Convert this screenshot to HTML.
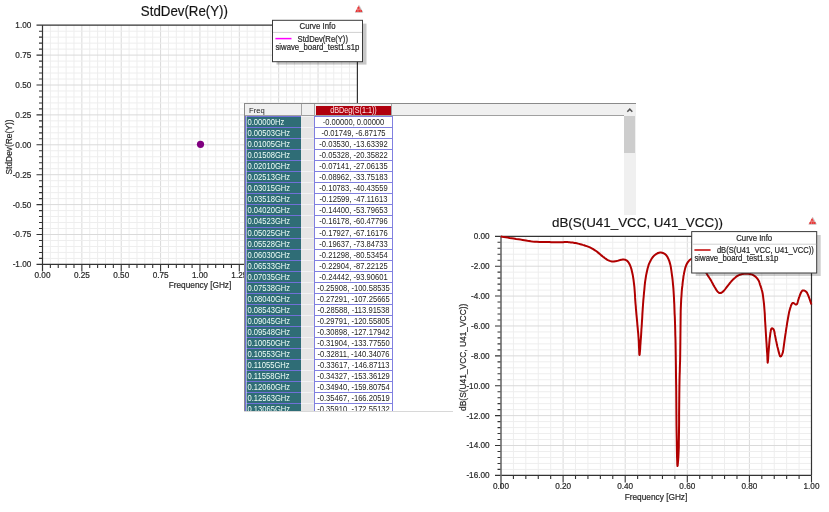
<!DOCTYPE html><html><head><meta charset="utf-8"><style>
html,body{margin:0;padding:0;background:#fff;width:829px;height:512px;overflow:hidden;font-family:"Liberation Sans", sans-serif;}
.abs{position:absolute;}
.fc{left:1px;width:56px;height:12px;background:#2f6d76;box-sizing:border-box;border-top:1px solid #7070d8;color:#f0fff8;font-size:7.6px;line-height:11.6px;padding-left:2.5px;white-space:nowrap}
.gc{left:57px;width:13px;height:12px;background:#e6e6e6;box-sizing:border-box;border-top:1px solid #f4f4f4}
.vc{left:70px;width:79px;height:12px;background:#fff;box-sizing:border-box;border:1px solid #8080e0;border-bottom:none;color:#222;font-size:7.6px;line-height:11.6px;text-align:center;white-space:nowrap}
.s{display:inline-block;transform:scaleY(1.15);transform-origin:50% 75%}
svg{position:absolute;left:0;top:0;will-change:transform;}
svg text{font-family:"Liberation Sans", sans-serif;stroke:#333;stroke-width:0.2px;}
#tbl{position:absolute;left:244px;top:103px;width:392px;height:309px;background:#fff;overflow:hidden;will-change:transform;}
</style></head><body>
<svg width="829" height="512" viewBox="0 0 829 512">
<line x1="50.37" y1="25.2" x2="50.37" y2="264.4" stroke="#eeeeee"/>
<line x1="58.24" y1="25.2" x2="58.24" y2="264.4" stroke="#eeeeee"/>
<line x1="66.12" y1="25.2" x2="66.12" y2="264.4" stroke="#eeeeee"/>
<line x1="73.99" y1="25.2" x2="73.99" y2="264.4" stroke="#eeeeee"/>
<line x1="81.86" y1="25.2" x2="81.86" y2="264.4" stroke="#dadada"/>
<line x1="89.73" y1="25.2" x2="89.73" y2="264.4" stroke="#eeeeee"/>
<line x1="97.61" y1="25.2" x2="97.61" y2="264.4" stroke="#eeeeee"/>
<line x1="105.48" y1="25.2" x2="105.48" y2="264.4" stroke="#eeeeee"/>
<line x1="113.35" y1="25.2" x2="113.35" y2="264.4" stroke="#eeeeee"/>
<line x1="121.22" y1="25.2" x2="121.22" y2="264.4" stroke="#dadada"/>
<line x1="129.1" y1="25.2" x2="129.1" y2="264.4" stroke="#eeeeee"/>
<line x1="136.97" y1="25.2" x2="136.97" y2="264.4" stroke="#eeeeee"/>
<line x1="144.84" y1="25.2" x2="144.84" y2="264.4" stroke="#eeeeee"/>
<line x1="152.71" y1="25.2" x2="152.71" y2="264.4" stroke="#eeeeee"/>
<line x1="160.59" y1="25.2" x2="160.59" y2="264.4" stroke="#dadada"/>
<line x1="168.46" y1="25.2" x2="168.46" y2="264.4" stroke="#eeeeee"/>
<line x1="176.33" y1="25.2" x2="176.33" y2="264.4" stroke="#eeeeee"/>
<line x1="184.2" y1="25.2" x2="184.2" y2="264.4" stroke="#eeeeee"/>
<line x1="192.08" y1="25.2" x2="192.08" y2="264.4" stroke="#eeeeee"/>
<line x1="199.95" y1="25.2" x2="199.95" y2="264.4" stroke="#dadada"/>
<line x1="207.82" y1="25.2" x2="207.82" y2="264.4" stroke="#eeeeee"/>
<line x1="215.69" y1="25.2" x2="215.69" y2="264.4" stroke="#eeeeee"/>
<line x1="223.57" y1="25.2" x2="223.57" y2="264.4" stroke="#eeeeee"/>
<line x1="231.44" y1="25.2" x2="231.44" y2="264.4" stroke="#eeeeee"/>
<line x1="239.31" y1="25.2" x2="239.31" y2="264.4" stroke="#dadada"/>
<line x1="247.19" y1="25.2" x2="247.19" y2="264.4" stroke="#eeeeee"/>
<line x1="255.06" y1="25.2" x2="255.06" y2="264.4" stroke="#eeeeee"/>
<line x1="262.93" y1="25.2" x2="262.93" y2="264.4" stroke="#eeeeee"/>
<line x1="270.8" y1="25.2" x2="270.8" y2="264.4" stroke="#eeeeee"/>
<line x1="278.68" y1="25.2" x2="278.68" y2="264.4" stroke="#dadada"/>
<line x1="286.55" y1="25.2" x2="286.55" y2="264.4" stroke="#eeeeee"/>
<line x1="294.42" y1="25.2" x2="294.42" y2="264.4" stroke="#eeeeee"/>
<line x1="302.29" y1="25.2" x2="302.29" y2="264.4" stroke="#eeeeee"/>
<line x1="310.16" y1="25.2" x2="310.16" y2="264.4" stroke="#eeeeee"/>
<line x1="318.04" y1="25.2" x2="318.04" y2="264.4" stroke="#dadada"/>
<line x1="325.91" y1="25.2" x2="325.91" y2="264.4" stroke="#eeeeee"/>
<line x1="333.78" y1="25.2" x2="333.78" y2="264.4" stroke="#eeeeee"/>
<line x1="341.65" y1="25.2" x2="341.65" y2="264.4" stroke="#eeeeee"/>
<line x1="349.53" y1="25.2" x2="349.53" y2="264.4" stroke="#eeeeee"/>
<line x1="42.5" y1="31.18" x2="357.4" y2="31.18" stroke="#eeeeee"/>
<line x1="42.5" y1="37.16" x2="357.4" y2="37.16" stroke="#eeeeee"/>
<line x1="42.5" y1="43.14" x2="357.4" y2="43.14" stroke="#eeeeee"/>
<line x1="42.5" y1="49.12" x2="357.4" y2="49.12" stroke="#eeeeee"/>
<line x1="42.5" y1="55.1" x2="357.4" y2="55.1" stroke="#dadada"/>
<line x1="42.5" y1="61.08" x2="357.4" y2="61.08" stroke="#eeeeee"/>
<line x1="42.5" y1="67.06" x2="357.4" y2="67.06" stroke="#eeeeee"/>
<line x1="42.5" y1="73.04" x2="357.4" y2="73.04" stroke="#eeeeee"/>
<line x1="42.5" y1="79.02" x2="357.4" y2="79.02" stroke="#eeeeee"/>
<line x1="42.5" y1="85" x2="357.4" y2="85" stroke="#dadada"/>
<line x1="42.5" y1="90.98" x2="357.4" y2="90.98" stroke="#eeeeee"/>
<line x1="42.5" y1="96.96" x2="357.4" y2="96.96" stroke="#eeeeee"/>
<line x1="42.5" y1="102.94" x2="357.4" y2="102.94" stroke="#eeeeee"/>
<line x1="42.5" y1="108.92" x2="357.4" y2="108.92" stroke="#eeeeee"/>
<line x1="42.5" y1="114.9" x2="357.4" y2="114.9" stroke="#dadada"/>
<line x1="42.5" y1="120.88" x2="357.4" y2="120.88" stroke="#eeeeee"/>
<line x1="42.5" y1="126.86" x2="357.4" y2="126.86" stroke="#eeeeee"/>
<line x1="42.5" y1="132.84" x2="357.4" y2="132.84" stroke="#eeeeee"/>
<line x1="42.5" y1="138.82" x2="357.4" y2="138.82" stroke="#eeeeee"/>
<line x1="42.5" y1="144.8" x2="357.4" y2="144.8" stroke="#dadada"/>
<line x1="42.5" y1="150.78" x2="357.4" y2="150.78" stroke="#eeeeee"/>
<line x1="42.5" y1="156.76" x2="357.4" y2="156.76" stroke="#eeeeee"/>
<line x1="42.5" y1="162.74" x2="357.4" y2="162.74" stroke="#eeeeee"/>
<line x1="42.5" y1="168.72" x2="357.4" y2="168.72" stroke="#eeeeee"/>
<line x1="42.5" y1="174.7" x2="357.4" y2="174.7" stroke="#dadada"/>
<line x1="42.5" y1="180.68" x2="357.4" y2="180.68" stroke="#eeeeee"/>
<line x1="42.5" y1="186.66" x2="357.4" y2="186.66" stroke="#eeeeee"/>
<line x1="42.5" y1="192.64" x2="357.4" y2="192.64" stroke="#eeeeee"/>
<line x1="42.5" y1="198.62" x2="357.4" y2="198.62" stroke="#eeeeee"/>
<line x1="42.5" y1="204.6" x2="357.4" y2="204.6" stroke="#dadada"/>
<line x1="42.5" y1="210.58" x2="357.4" y2="210.58" stroke="#eeeeee"/>
<line x1="42.5" y1="216.56" x2="357.4" y2="216.56" stroke="#eeeeee"/>
<line x1="42.5" y1="222.54" x2="357.4" y2="222.54" stroke="#eeeeee"/>
<line x1="42.5" y1="228.52" x2="357.4" y2="228.52" stroke="#eeeeee"/>
<line x1="42.5" y1="234.5" x2="357.4" y2="234.5" stroke="#dadada"/>
<line x1="42.5" y1="240.48" x2="357.4" y2="240.48" stroke="#eeeeee"/>
<line x1="42.5" y1="246.46" x2="357.4" y2="246.46" stroke="#eeeeee"/>
<line x1="42.5" y1="252.44" x2="357.4" y2="252.44" stroke="#eeeeee"/>
<line x1="42.5" y1="258.42" x2="357.4" y2="258.42" stroke="#eeeeee"/>
<path d="M50.37 264.4V267.9M58.24 264.4V267.9M66.12 264.4V267.9M73.99 264.4V267.9M81.86 264.4V271.4M89.73 264.4V267.9M97.61 264.4V267.9M105.48 264.4V267.9M113.35 264.4V267.9M121.22 264.4V271.4M129.1 264.4V267.9M136.97 264.4V267.9M144.84 264.4V267.9M152.71 264.4V267.9M160.59 264.4V271.4M168.46 264.4V267.9M176.33 264.4V267.9M184.2 264.4V267.9M192.08 264.4V267.9M199.95 264.4V271.4M207.82 264.4V267.9M215.69 264.4V267.9M223.57 264.4V267.9M231.44 264.4V267.9M239.31 264.4V271.4M247.19 264.4V267.9M255.06 264.4V267.9M262.93 264.4V267.9M270.8 264.4V267.9M278.68 264.4V271.4M286.55 264.4V267.9M294.42 264.4V267.9M302.29 264.4V267.9M310.16 264.4V267.9M318.04 264.4V271.4M325.91 264.4V267.9M333.78 264.4V267.9M341.65 264.4V267.9M349.53 264.4V267.9M357.4 264.4V271.4M39 31.18H42.5M39 37.16H42.5M39 43.14H42.5M39 49.12H42.5M36.5 55.1H42.5M39 61.08H42.5M39 67.06H42.5M39 73.04H42.5M39 79.02H42.5M36.5 85H42.5M39 90.98H42.5M39 96.96H42.5M39 102.94H42.5M39 108.92H42.5M36.5 114.9H42.5M39 120.88H42.5M39 126.86H42.5M39 132.84H42.5M39 138.82H42.5M36.5 144.8H42.5M39 150.78H42.5M39 156.76H42.5M39 162.74H42.5M39 168.72H42.5M36.5 174.7H42.5M39 180.68H42.5M39 186.66H42.5M39 192.64H42.5M39 198.62H42.5M36.5 204.6H42.5M39 210.58H42.5M39 216.56H42.5M39 222.54H42.5M39 228.52H42.5M36.5 234.5H42.5M39 240.48H42.5M39 246.46H42.5M39 252.44H42.5M39 258.42H42.5" stroke="#333" stroke-width="1.1" fill="none"/>
<path d="M36.5 25.2H357.4 M36.5 264.4H357.4 M357.4 25.2V264.4" stroke="#333" stroke-width="1.2" fill="none"/>
<path d="M42.5 25.2V271.4" stroke="#333" stroke-width="1.2" fill="none"/>
<circle cx="200.5" cy="144.3" r="3.6" fill="#800080"/>
<text transform="translate(31.3 28.1) scale(1 1.12)" font-size="8.2" fill="#222" text-anchor="end">1.00</text>
<text transform="translate(31.3 58) scale(1 1.12)" font-size="8.2" fill="#222" text-anchor="end">0.75</text>
<text transform="translate(31.3 87.9) scale(1 1.12)" font-size="8.2" fill="#222" text-anchor="end">0.50</text>
<text transform="translate(31.3 117.8) scale(1 1.12)" font-size="8.2" fill="#222" text-anchor="end">0.25</text>
<text transform="translate(31.3 147.7) scale(1 1.12)" font-size="8.2" fill="#222" text-anchor="end">0.00</text>
<text transform="translate(31.3 177.6) scale(1 1.12)" font-size="8.2" fill="#222" text-anchor="end">-0.25</text>
<text transform="translate(31.3 207.5) scale(1 1.12)" font-size="8.2" fill="#222" text-anchor="end">-0.50</text>
<text transform="translate(31.3 237.4) scale(1 1.12)" font-size="8.2" fill="#222" text-anchor="end">-0.75</text>
<text transform="translate(31.3 267.3) scale(1 1.12)" font-size="8.2" fill="#222" text-anchor="end">-1.00</text>
<text transform="translate(42.5 278.2) scale(1 1.12)" font-size="8.2" fill="#222" text-anchor="middle">0.00</text>
<text transform="translate(81.86 278.2) scale(1 1.12)" font-size="8.2" fill="#222" text-anchor="middle">0.25</text>
<text transform="translate(121.22 278.2) scale(1 1.12)" font-size="8.2" fill="#222" text-anchor="middle">0.50</text>
<text transform="translate(160.59 278.2) scale(1 1.12)" font-size="8.2" fill="#222" text-anchor="middle">0.75</text>
<text transform="translate(199.95 278.2) scale(1 1.12)" font-size="8.2" fill="#222" text-anchor="middle">1.00</text>
<text transform="translate(239.31 278.2) scale(1 1.12)" font-size="8.2" fill="#222" text-anchor="middle">1.25</text>
<text transform="translate(278.67 278.2) scale(1 1.12)" font-size="8.2" fill="#222" text-anchor="middle">1.50</text>
<text transform="translate(318.04 278.2) scale(1 1.12)" font-size="8.2" fill="#222" text-anchor="middle">1.75</text>
<text transform="translate(357.4 278.2) scale(1 1.12)" font-size="8.2" fill="#222" text-anchor="middle">2.00</text>
<text transform="translate(200 288) scale(1 1.12)" font-size="8.3" fill="#222" text-anchor="middle">Frequency [GHz]</text>
<text transform="translate(184.4 15.7) scale(1 1.1)" font-size="13.3" fill="#111" text-anchor="middle">StdDev(Re(Y))</text>
<text transform="translate(11.8 147) rotate(-90) scale(1 1.12)" font-size="8.4" fill="#222" text-anchor="middle">StdDev(Re(Y))</text>
<g transform="translate(359 5)"><path d="M-0.3 0.3L3.5 7.2H-4Z" fill="#e04848" opacity="0.75"/><path d="M0 0.2L3.8 7.2H-4" fill="none" stroke="#9aa" stroke-width="0.5"/><circle cx="-0.6" cy="2.8" r="0.9" fill="#e83030"/><circle cx="-2.3" cy="6" r="0.9" fill="#e83030"/><circle cx="0.2" cy="6" r="0.9" fill="#e83030"/><circle cx="2.2" cy="6" r="0.9" fill="#e83030"/></g>
<rect x="276.5" y="23.6" width="90" height="41" fill="#000" fill-opacity="0.22"/>
<rect x="272.5" y="20.3" width="90" height="41.4" fill="#fff" stroke="#3a3a3a" stroke-width="1"/>
<line x1="273" y1="32.4" x2="362" y2="32.4" stroke="#d0d0d0"/>
<text transform="translate(317.5 29.2) scale(1 1.12)" font-size="7.8" fill="#222" text-anchor="middle">Curve Info</text>
<line x1="275.4" y1="38.6" x2="291.5" y2="38.6" stroke="#ff00ff" stroke-width="1.5"/>
<text transform="translate(297.6 42.2) scale(1 1.12)" font-size="7.7" fill="#222">StdDev(Re(Y))</text>
<text transform="translate(275.4 50) scale(1 1.12)" font-size="7.8" fill="#222">siwave_board_test1.s1p</text>
</svg>
<div id="tbl">
<div class="abs" style="left:0;top:0;width:392px;height:309px;box-sizing:border-box;border:1px solid #8a8a8a;border-right:none;border-bottom:none"></div>
<div class="abs" style="left:1px;top:1px;width:391px;height:11px;background:#f0f0f0;border-bottom:1px solid #a0a0a0"></div>
<div class="abs" style="left:56.5px;top:1px;width:1.6px;height:12px;background:#a4a4a4"></div>
<div class="abs" style="left:69.5px;top:1px;width:1.6px;height:12px;background:#a4a4a4"></div>
<div class="abs" style="left:146.8px;top:1px;width:1.6px;height:12px;background:#a4a4a4"></div>
<div class="abs" style="left:5px;top:2px;font-size:7.6px;line-height:11px;color:#222">Freq</div>
<div class="abs" style="left:72px;top:3px;width:75px;height:9px;background:#b0000e;color:#ffe6e6;font-size:7.6px;line-height:10px;text-align:center"><span class="s" style="transform:scale(.95,1.12)">dBDeg(S(1:1))</span></div>
<div class="abs" style="left:380px;top:1px;width:12px;height:308px;background:#f0f0f0"></div>
<div class="abs" style="left:380px;top:13px;width:11px;height:37px;background:#cdcdcd"></div>
<svg class="abs" style="left:380px;top:1px" width="12" height="12"><path d="M3.3 7.8L5.8 5.2L8.3 7.8" stroke="#555" stroke-width="1.5" fill="none"/></svg>
<div class="abs fc" style="top:13px"><span class="s">0.00000Hz</span></div>
<div class="abs gc" style="top:13px"></div>
<div class="abs vc" style="top:13px"><span class="s">-0.00000, 0.00000</span></div>
<div class="abs fc" style="top:24.05px"><span class="s">0.00503GHz</span></div>
<div class="abs gc" style="top:24.05px"></div>
<div class="abs vc" style="top:24.05px"><span class="s">-0.01749, -6.87175</span></div>
<div class="abs fc" style="top:35.1px"><span class="s">0.01005GHz</span></div>
<div class="abs gc" style="top:35.1px"></div>
<div class="abs vc" style="top:35.1px"><span class="s">-0.03530, -13.63392</span></div>
<div class="abs fc" style="top:46.15px"><span class="s">0.01508GHz</span></div>
<div class="abs gc" style="top:46.15px"></div>
<div class="abs vc" style="top:46.15px"><span class="s">-0.05328, -20.35822</span></div>
<div class="abs fc" style="top:57.2px"><span class="s">0.02010GHz</span></div>
<div class="abs gc" style="top:57.2px"></div>
<div class="abs vc" style="top:57.2px"><span class="s">-0.07141, -27.06135</span></div>
<div class="abs fc" style="top:68.25px"><span class="s">0.02513GHz</span></div>
<div class="abs gc" style="top:68.25px"></div>
<div class="abs vc" style="top:68.25px"><span class="s">-0.08962, -33.75183</span></div>
<div class="abs fc" style="top:79.3px"><span class="s">0.03015GHz</span></div>
<div class="abs gc" style="top:79.3px"></div>
<div class="abs vc" style="top:79.3px"><span class="s">-0.10783, -40.43559</span></div>
<div class="abs fc" style="top:90.35px"><span class="s">0.03518GHz</span></div>
<div class="abs gc" style="top:90.35px"></div>
<div class="abs vc" style="top:90.35px"><span class="s">-0.12599, -47.11613</span></div>
<div class="abs fc" style="top:101.4px"><span class="s">0.04020GHz</span></div>
<div class="abs gc" style="top:101.4px"></div>
<div class="abs vc" style="top:101.4px"><span class="s">-0.14400, -53.79653</span></div>
<div class="abs fc" style="top:112.45px"><span class="s">0.04523GHz</span></div>
<div class="abs gc" style="top:112.45px"></div>
<div class="abs vc" style="top:112.45px"><span class="s">-0.16178, -60.47796</span></div>
<div class="abs fc" style="top:123.5px"><span class="s">0.05025GHz</span></div>
<div class="abs gc" style="top:123.5px"></div>
<div class="abs vc" style="top:123.5px"><span class="s">-0.17927, -67.16176</span></div>
<div class="abs fc" style="top:134.55px"><span class="s">0.05528GHz</span></div>
<div class="abs gc" style="top:134.55px"></div>
<div class="abs vc" style="top:134.55px"><span class="s">-0.19637, -73.84733</span></div>
<div class="abs fc" style="top:145.6px"><span class="s">0.06030GHz</span></div>
<div class="abs gc" style="top:145.6px"></div>
<div class="abs vc" style="top:145.6px"><span class="s">-0.21298, -80.53454</span></div>
<div class="abs fc" style="top:156.65px"><span class="s">0.06533GHz</span></div>
<div class="abs gc" style="top:156.65px"></div>
<div class="abs vc" style="top:156.65px"><span class="s">-0.22904, -87.22125</span></div>
<div class="abs fc" style="top:167.7px"><span class="s">0.07035GHz</span></div>
<div class="abs gc" style="top:167.7px"></div>
<div class="abs vc" style="top:167.7px"><span class="s">-0.24442, -93.90601</span></div>
<div class="abs fc" style="top:178.75px"><span class="s">0.07538GHz</span></div>
<div class="abs gc" style="top:178.75px"></div>
<div class="abs vc" style="top:178.75px"><span class="s">-0.25908, -100.58535</span></div>
<div class="abs fc" style="top:189.8px"><span class="s">0.08040GHz</span></div>
<div class="abs gc" style="top:189.8px"></div>
<div class="abs vc" style="top:189.8px"><span class="s">-0.27291, -107.25665</span></div>
<div class="abs fc" style="top:200.85px"><span class="s">0.08543GHz</span></div>
<div class="abs gc" style="top:200.85px"></div>
<div class="abs vc" style="top:200.85px"><span class="s">-0.28588, -113.91538</span></div>
<div class="abs fc" style="top:211.9px"><span class="s">0.09045GHz</span></div>
<div class="abs gc" style="top:211.9px"></div>
<div class="abs vc" style="top:211.9px"><span class="s">-0.29791, -120.55805</span></div>
<div class="abs fc" style="top:222.95px"><span class="s">0.09548GHz</span></div>
<div class="abs gc" style="top:222.95px"></div>
<div class="abs vc" style="top:222.95px"><span class="s">-0.30898, -127.17942</span></div>
<div class="abs fc" style="top:234px"><span class="s">0.10050GHz</span></div>
<div class="abs gc" style="top:234px"></div>
<div class="abs vc" style="top:234px"><span class="s">-0.31904, -133.77550</span></div>
<div class="abs fc" style="top:245.05px"><span class="s">0.10553GHz</span></div>
<div class="abs gc" style="top:245.05px"></div>
<div class="abs vc" style="top:245.05px"><span class="s">-0.32811, -140.34076</span></div>
<div class="abs fc" style="top:256.1px"><span class="s">0.11055GHz</span></div>
<div class="abs gc" style="top:256.1px"></div>
<div class="abs vc" style="top:256.1px"><span class="s">-0.33617, -146.87113</span></div>
<div class="abs fc" style="top:267.15px"><span class="s">0.11558GHz</span></div>
<div class="abs gc" style="top:267.15px"></div>
<div class="abs vc" style="top:267.15px"><span class="s">-0.34327, -153.36129</span></div>
<div class="abs fc" style="top:278.2px"><span class="s">0.12060GHz</span></div>
<div class="abs gc" style="top:278.2px"></div>
<div class="abs vc" style="top:278.2px"><span class="s">-0.34940, -159.80754</span></div>
<div class="abs fc" style="top:289.25px"><span class="s">0.12563GHz</span></div>
<div class="abs gc" style="top:289.25px"></div>
<div class="abs vc" style="top:289.25px"><span class="s">-0.35467, -166.20519</span></div>
<div class="abs fc" style="top:300.3px"><span class="s">0.13065GHz</span></div>
<div class="abs gc" style="top:300.3px"></div>
<div class="abs vc" style="top:300.3px"><span class="s">-0.35910, -172.55132</span></div>
<div class="abs" style="left:1px;top:13px;width:1px;height:300px;background:#7070d8"></div>
<div class="abs" style="left:2px;top:13px;width:1px;height:300px;background:#dfe8ee;opacity:.6"></div>
</div>
<div class="abs" style="left:244px;top:411px;width:209px;height:1px;background:#d8d8d8"></div>
<div class="abs" style="left:453px;top:215px;width:376px;height:297px;background:#fff"></div>
<svg width="829" height="512" viewBox="0 0 829 512">
<line x1="513.42" y1="236.3" x2="513.42" y2="475.4" stroke="#eeeeee"/>
<line x1="525.84" y1="236.3" x2="525.84" y2="475.4" stroke="#eeeeee"/>
<line x1="538.26" y1="236.3" x2="538.26" y2="475.4" stroke="#eeeeee"/>
<line x1="550.68" y1="236.3" x2="550.68" y2="475.4" stroke="#eeeeee"/>
<line x1="563.1" y1="236.3" x2="563.1" y2="475.4" stroke="#dadada"/>
<line x1="575.52" y1="236.3" x2="575.52" y2="475.4" stroke="#eeeeee"/>
<line x1="587.94" y1="236.3" x2="587.94" y2="475.4" stroke="#eeeeee"/>
<line x1="600.36" y1="236.3" x2="600.36" y2="475.4" stroke="#eeeeee"/>
<line x1="612.78" y1="236.3" x2="612.78" y2="475.4" stroke="#eeeeee"/>
<line x1="625.2" y1="236.3" x2="625.2" y2="475.4" stroke="#dadada"/>
<line x1="637.62" y1="236.3" x2="637.62" y2="475.4" stroke="#eeeeee"/>
<line x1="650.04" y1="236.3" x2="650.04" y2="475.4" stroke="#eeeeee"/>
<line x1="662.46" y1="236.3" x2="662.46" y2="475.4" stroke="#eeeeee"/>
<line x1="674.88" y1="236.3" x2="674.88" y2="475.4" stroke="#eeeeee"/>
<line x1="687.3" y1="236.3" x2="687.3" y2="475.4" stroke="#dadada"/>
<line x1="699.72" y1="236.3" x2="699.72" y2="475.4" stroke="#eeeeee"/>
<line x1="712.14" y1="236.3" x2="712.14" y2="475.4" stroke="#eeeeee"/>
<line x1="724.56" y1="236.3" x2="724.56" y2="475.4" stroke="#eeeeee"/>
<line x1="736.98" y1="236.3" x2="736.98" y2="475.4" stroke="#eeeeee"/>
<line x1="749.4" y1="236.3" x2="749.4" y2="475.4" stroke="#dadada"/>
<line x1="761.82" y1="236.3" x2="761.82" y2="475.4" stroke="#eeeeee"/>
<line x1="774.24" y1="236.3" x2="774.24" y2="475.4" stroke="#eeeeee"/>
<line x1="786.66" y1="236.3" x2="786.66" y2="475.4" stroke="#eeeeee"/>
<line x1="799.08" y1="236.3" x2="799.08" y2="475.4" stroke="#eeeeee"/>
<line x1="501" y1="242.28" x2="811.5" y2="242.28" stroke="#eeeeee"/>
<line x1="501" y1="248.25" x2="811.5" y2="248.25" stroke="#eeeeee"/>
<line x1="501" y1="254.23" x2="811.5" y2="254.23" stroke="#eeeeee"/>
<line x1="501" y1="260.21" x2="811.5" y2="260.21" stroke="#eeeeee"/>
<line x1="501" y1="266.19" x2="811.5" y2="266.19" stroke="#dadada"/>
<line x1="501" y1="272.17" x2="811.5" y2="272.17" stroke="#eeeeee"/>
<line x1="501" y1="278.14" x2="811.5" y2="278.14" stroke="#eeeeee"/>
<line x1="501" y1="284.12" x2="811.5" y2="284.12" stroke="#eeeeee"/>
<line x1="501" y1="290.1" x2="811.5" y2="290.1" stroke="#eeeeee"/>
<line x1="501" y1="296.07" x2="811.5" y2="296.07" stroke="#dadada"/>
<line x1="501" y1="302.05" x2="811.5" y2="302.05" stroke="#eeeeee"/>
<line x1="501" y1="308.03" x2="811.5" y2="308.03" stroke="#eeeeee"/>
<line x1="501" y1="314.01" x2="811.5" y2="314.01" stroke="#eeeeee"/>
<line x1="501" y1="319.99" x2="811.5" y2="319.99" stroke="#eeeeee"/>
<line x1="501" y1="325.96" x2="811.5" y2="325.96" stroke="#dadada"/>
<line x1="501" y1="331.94" x2="811.5" y2="331.94" stroke="#eeeeee"/>
<line x1="501" y1="337.92" x2="811.5" y2="337.92" stroke="#eeeeee"/>
<line x1="501" y1="343.89" x2="811.5" y2="343.89" stroke="#eeeeee"/>
<line x1="501" y1="349.87" x2="811.5" y2="349.87" stroke="#eeeeee"/>
<line x1="501" y1="355.85" x2="811.5" y2="355.85" stroke="#dadada"/>
<line x1="501" y1="361.83" x2="811.5" y2="361.83" stroke="#eeeeee"/>
<line x1="501" y1="367.8" x2="811.5" y2="367.8" stroke="#eeeeee"/>
<line x1="501" y1="373.78" x2="811.5" y2="373.78" stroke="#eeeeee"/>
<line x1="501" y1="379.76" x2="811.5" y2="379.76" stroke="#eeeeee"/>
<line x1="501" y1="385.74" x2="811.5" y2="385.74" stroke="#dadada"/>
<line x1="501" y1="391.72" x2="811.5" y2="391.72" stroke="#eeeeee"/>
<line x1="501" y1="397.69" x2="811.5" y2="397.69" stroke="#eeeeee"/>
<line x1="501" y1="403.67" x2="811.5" y2="403.67" stroke="#eeeeee"/>
<line x1="501" y1="409.65" x2="811.5" y2="409.65" stroke="#eeeeee"/>
<line x1="501" y1="415.62" x2="811.5" y2="415.62" stroke="#dadada"/>
<line x1="501" y1="421.6" x2="811.5" y2="421.6" stroke="#eeeeee"/>
<line x1="501" y1="427.58" x2="811.5" y2="427.58" stroke="#eeeeee"/>
<line x1="501" y1="433.56" x2="811.5" y2="433.56" stroke="#eeeeee"/>
<line x1="501" y1="439.53" x2="811.5" y2="439.53" stroke="#eeeeee"/>
<line x1="501" y1="445.51" x2="811.5" y2="445.51" stroke="#dadada"/>
<line x1="501" y1="451.49" x2="811.5" y2="451.49" stroke="#eeeeee"/>
<line x1="501" y1="457.47" x2="811.5" y2="457.47" stroke="#eeeeee"/>
<line x1="501" y1="463.44" x2="811.5" y2="463.44" stroke="#eeeeee"/>
<line x1="501" y1="469.42" x2="811.5" y2="469.42" stroke="#eeeeee"/>
<path d="M513.42 475.4V478.9M525.84 475.4V478.9M538.26 475.4V478.9M550.68 475.4V478.9M563.1 475.4V482.4M575.52 475.4V478.9M587.94 475.4V478.9M600.36 475.4V478.9M612.78 475.4V478.9M625.2 475.4V482.4M637.62 475.4V478.9M650.04 475.4V478.9M662.46 475.4V478.9M674.88 475.4V478.9M687.3 475.4V482.4M699.72 475.4V478.9M712.14 475.4V478.9M724.56 475.4V478.9M736.98 475.4V478.9M749.4 475.4V482.4M761.82 475.4V478.9M774.24 475.4V478.9M786.66 475.4V478.9M799.08 475.4V478.9M811.5 475.4V482.4M497.5 242.28H501M497.5 248.25H501M497.5 254.23H501M497.5 260.21H501M495 266.19H501M497.5 272.17H501M497.5 278.14H501M497.5 284.12H501M497.5 290.1H501M495 296.07H501M497.5 302.05H501M497.5 308.03H501M497.5 314.01H501M497.5 319.99H501M495 325.96H501M497.5 331.94H501M497.5 337.92H501M497.5 343.89H501M497.5 349.87H501M495 355.85H501M497.5 361.83H501M497.5 367.8H501M497.5 373.78H501M497.5 379.76H501M495 385.74H501M497.5 391.72H501M497.5 397.69H501M497.5 403.67H501M497.5 409.65H501M495 415.62H501M497.5 421.6H501M497.5 427.58H501M497.5 433.56H501M497.5 439.53H501M495 445.51H501M497.5 451.49H501M497.5 457.47H501M497.5 463.44H501M497.5 469.42H501" stroke="#333" stroke-width="1.1" fill="none"/>
<path d="M495 236.3H811.5 M495 475.4H811.5 M811.5 236.3V475.4" stroke="#333" stroke-width="1.2" fill="none"/>
<path d="M501 236.3V488.4" stroke="#6a6a6a" stroke-width="1.6" fill="none"/>
<polyline points="500.7,236.5 501.1,236.6 502.3,236.8 503.9,237.0 505.8,237.3 507.7,237.6 509.5,237.9 511.6,238.2 513.8,238.5 516.1,238.9 518.4,239.2 520.6,239.6 522.7,239.9 524.4,240.2 526.0,240.5 527.5,240.8 529.1,241.0 530.7,241.3 532.4,241.5 534.7,241.7 537.0,241.8 539.5,241.9 542.0,242.0 544.5,242.0 546.9,242.1 549.2,242.1 551.4,242.2 553.7,242.2 555.9,242.2 558.0,242.2 560.0,242.2 561.6,242.2 563.1,242.2 564.6,242.1 566.1,242.1 567.5,242.1 568.8,242.2 569.8,242.3 570.8,242.4 571.7,242.5 572.7,242.6 573.6,242.7 574.6,242.9 575.7,243.1 576.8,243.3 578.0,243.6 579.2,243.9 580.3,244.2 581.5,244.5 582.8,244.9 584.1,245.2 585.4,245.7 586.7,246.1 588.0,246.6 589.3,247.1 590.5,247.7 591.7,248.3 592.8,248.9 593.9,249.6 595.0,250.3 596.1,251.0 597.1,251.8 598.1,252.6 599.1,253.4 600.1,254.3 601.0,255.1 602.0,255.9 603.0,256.7 604.0,257.4 605.0,258.2 606.0,258.9 607.0,259.6 607.9,260.1 608.6,260.4 609.2,260.7 609.8,260.9 610.5,261.1 611.1,261.3 611.8,261.4 612.6,261.5 613.4,261.5 614.2,261.4 615.0,261.3 615.8,261.2 616.6,261.1 617.3,260.9 618.1,260.7 618.8,260.4 619.5,260.2 620.3,259.9 621.0,259.8 621.8,259.7 622.6,259.6 623.5,259.6 624.3,259.6 625.1,259.8 625.8,260.0 626.5,260.4 627.1,260.8 627.7,261.4 628.2,262.0 628.7,262.7 629.2,263.5 629.8,264.7 630.4,266.1 630.9,267.5 631.4,269.1 631.8,270.8 632.2,272.5 632.7,274.7 633.1,277.1 633.5,279.6 633.8,282.1 634.1,284.7 634.4,287.2 634.6,289.9 634.8,292.5 635.0,295.2 635.1,297.9 635.3,300.7 635.5,303.5 635.8,306.6 636.0,309.7 636.3,312.9 636.6,316.1 636.9,319.2 637.2,322.3 637.4,325.1 637.7,327.9 637.9,330.6 638.2,333.3 638.4,336.0 638.6,338.7 638.8,341.8 638.9,345.3 639.1,348.9 639.2,352.0 639.3,354.2 639.5,355.0 639.7,354.5 639.8,353.0 640.0,350.9 640.2,348.4 640.3,345.8 640.5,343.4 640.7,340.3 641.0,336.9 641.2,333.4 641.4,329.7 641.7,326.0 641.9,322.3 642.2,318.1 642.4,313.8 642.7,309.4 643.0,305.0 643.3,300.7 643.7,296.5 644.0,292.8 644.4,289.1 644.7,285.5 645.1,281.9 645.6,278.6 646.1,275.4 646.6,273.0 647.1,270.7 647.6,268.5 648.2,266.4 648.8,264.4 649.6,262.6 650.3,261.2 651.0,259.9 651.7,258.6 652.5,257.5 653.4,256.4 654.3,255.5 655.2,254.8 656.1,254.1 657.1,253.5 658.1,253.0 659.1,252.7 660.1,252.5 661.0,252.5 662.0,252.7 662.9,253.0 663.8,253.4 664.7,253.9 665.5,254.5 666.3,255.3 667.1,256.3 667.7,257.5 668.3,258.7 668.9,260.1 669.4,261.4 669.9,263.1 670.4,264.9 670.8,266.9 671.1,268.9 671.4,270.9 671.7,273.1 672.1,276.0 672.5,279.0 672.8,282.2 673.1,285.4 673.4,288.6 673.6,291.8 673.8,294.9 674.0,298.0 674.1,301.1 674.3,304.3 674.4,307.4 674.5,310.5 674.6,313.5 674.8,316.5 674.9,319.5 675.0,322.5 675.1,325.7 675.2,329.2 675.3,334.4 675.5,339.8 675.6,345.6 675.7,351.7 675.8,358.2 675.9,365.0 676.0,375.8 676.2,388.1 676.3,401.1 676.4,414.0 676.5,426.0 676.7,436.4 676.8,442.8 676.9,449.4 677.0,455.7 677.2,461.0 677.3,464.6 677.5,466.0 677.7,465.4 677.8,463.9 678.0,461.8 678.2,459.3 678.4,456.7 678.5,454.4 678.6,452.0 678.7,449.7 678.8,447.3 678.8,444.7 678.8,441.9 678.9,438.7 679.0,431.7 679.1,423.2 679.1,413.9 679.2,404.4 679.3,395.2 679.4,387.0 679.5,381.3 679.6,376.0 679.8,371.0 679.9,365.9 680.1,360.7 680.2,355.0 680.3,346.9 680.4,337.9 680.5,328.6 680.6,319.4 680.7,310.9 681.0,303.5 681.2,299.4 681.5,295.5 681.7,292.0 682.0,288.6 682.4,285.4 682.7,282.4 683.0,280.2 683.3,278.1 683.5,276.1 683.9,274.2 684.2,272.4 684.6,270.7 684.9,269.4 685.2,268.1 685.6,266.9 686.0,265.8 686.4,264.7 686.9,263.7 687.4,262.9 687.9,262.1 688.5,261.3 689.1,260.6 689.7,260.0 690.4,259.5 691.1,259.1 691.8,258.7 692.6,258.3 693.4,258.1 694.2,258.0 695.0,258.0 696.0,258.2 697.0,258.7 698.1,259.3 699.1,260.1 700.1,261.0 701.0,262.0 702.1,263.6 703.1,265.5 704.0,267.6 704.9,269.8 705.7,271.8 706.6,273.6 707.2,274.6 707.8,275.6 708.4,276.4 709.0,277.3 709.6,278.2 710.2,279.1 710.9,280.2 711.5,281.4 712.1,282.6 712.8,283.8 713.4,285.0 714.1,286.1 714.7,287.2 715.4,288.3 716.0,289.4 716.7,290.4 717.4,291.3 718.0,292.0 718.4,292.3 718.8,292.6 719.1,292.8 719.5,293.0 719.9,293.1 720.3,293.1 720.8,293.0 721.3,292.8 721.8,292.5 722.3,292.1 722.9,291.7 723.4,291.2 724.2,290.4 724.9,289.5 725.7,288.5 726.5,287.4 727.3,286.3 728.1,285.3 728.9,284.4 729.6,283.4 730.4,282.5 731.2,281.5 732.0,280.6 732.8,279.8 733.6,279.1 734.3,278.3 735.1,277.7 735.9,277.0 736.7,276.4 737.5,275.9 738.3,275.5 739.0,275.1 739.8,274.7 740.6,274.5 741.4,274.2 742.2,274.0 743.0,273.9 743.8,273.8 744.5,273.7 745.3,273.7 746.1,273.7 746.9,273.8 747.7,273.8 748.5,273.8 749.3,273.9 750.1,274.0 750.9,274.2 751.6,274.4 752.3,274.7 753.0,275.0 753.7,275.4 754.3,275.8 754.9,276.2 755.5,276.7 756.1,277.3 756.7,277.9 757.2,278.5 757.7,279.2 758.2,279.9 758.6,280.6 759.0,281.3 759.3,282.1 759.5,282.8 759.8,283.6 760.0,284.5 760.3,285.3 760.7,286.4 761.0,287.4 761.4,288.5 761.7,289.7 762.1,291.0 762.4,292.3 762.8,294.3 763.1,296.6 763.4,299.0 763.7,301.5 764.0,303.9 764.2,306.4 764.4,309.0 764.6,311.5 764.8,314.1 764.9,316.8 765.0,319.5 765.2,322.2 765.4,325.4 765.6,328.6 765.8,332.0 766.0,335.3 766.2,338.5 766.4,341.6 766.6,344.1 766.7,346.6 766.9,349.1 767.0,351.4 767.2,353.7 767.3,355.7 767.4,357.2 767.4,358.7 767.5,360.2 767.6,361.5 767.6,362.4 767.7,362.7 767.8,362.1 768.0,360.5 768.2,358.1 768.3,355.5 768.5,352.8 768.7,350.4 768.9,348.1 769.1,345.6 769.3,343.2 769.5,340.7 769.7,338.4 770.0,336.3 770.2,334.7 770.4,333.0 770.7,331.4 770.9,330.0 771.3,328.9 771.7,328.4 772.0,328.3 772.3,328.4 772.6,328.5 772.9,328.7 773.2,329.0 773.5,329.3 773.9,330.0 774.2,331.0 774.5,332.2 774.7,333.6 774.9,334.9 775.2,336.3 775.6,338.2 776.0,340.2 776.5,342.4 776.9,344.6 777.4,346.7 777.9,348.6 778.3,350.2 778.7,351.9 779.2,353.6 779.6,355.0 780.0,356.1 780.5,356.5 780.8,356.4 781.1,356.2 781.4,355.7 781.7,355.2 782.0,354.6 782.3,353.9 782.9,352.1 783.3,349.7 783.7,346.9 784.1,343.9 784.5,340.9 784.9,338.1 785.3,335.2 785.8,332.2 786.2,329.2 786.7,326.2 787.1,323.3 787.6,320.5 788.0,318.3 788.4,316.0 788.8,313.9 789.2,311.8 789.7,309.9 790.2,308.2 790.6,307.1 790.9,305.9 791.3,304.9 791.8,304.0 792.2,303.3 792.8,302.9 793.3,302.9 794.0,303.3 794.6,303.8 795.3,304.3 795.9,304.6 796.4,304.6 797.0,304.1 797.4,303.1 797.8,301.8 798.2,300.3 798.6,298.9 799.0,297.6 799.5,296.3 800.0,294.9 800.6,293.5 801.2,292.2 801.8,291.2 802.5,290.6 803.0,290.5 803.6,290.5 804.3,290.6 804.9,290.9 805.5,291.2 806.0,291.6 806.6,292.2 807.1,292.9 807.5,293.8 807.9,294.7 808.3,295.6 808.7,296.6 809.2,298.0 809.8,299.7 810.4,301.5 810.9,303.0 811.3,304.2 811.4,304.6" fill="none" stroke="#b00000" stroke-width="2" stroke-linejoin="round"/>
<text transform="translate(489.6 239.2) scale(1 1.12)" font-size="8.2" fill="#222" text-anchor="end">0.00</text>
<text transform="translate(489.6 269.09) scale(1 1.12)" font-size="8.2" fill="#222" text-anchor="end">-2.00</text>
<text transform="translate(489.6 298.97) scale(1 1.12)" font-size="8.2" fill="#222" text-anchor="end">-4.00</text>
<text transform="translate(489.6 328.86) scale(1 1.12)" font-size="8.2" fill="#222" text-anchor="end">-6.00</text>
<text transform="translate(489.6 358.75) scale(1 1.12)" font-size="8.2" fill="#222" text-anchor="end">-8.00</text>
<text transform="translate(489.6 388.64) scale(1 1.12)" font-size="8.2" fill="#222" text-anchor="end">-10.00</text>
<text transform="translate(489.6 418.52) scale(1 1.12)" font-size="8.2" fill="#222" text-anchor="end">-12.00</text>
<text transform="translate(489.6 448.41) scale(1 1.12)" font-size="8.2" fill="#222" text-anchor="end">-14.00</text>
<text transform="translate(489.6 478.3) scale(1 1.12)" font-size="8.2" fill="#222" text-anchor="end">-16.00</text>
<text transform="translate(501 489.2) scale(1 1.12)" font-size="8.2" fill="#222" text-anchor="middle">0.00</text>
<text transform="translate(563.1 489.2) scale(1 1.12)" font-size="8.2" fill="#222" text-anchor="middle">0.20</text>
<text transform="translate(625.2 489.2) scale(1 1.12)" font-size="8.2" fill="#222" text-anchor="middle">0.40</text>
<text transform="translate(687.3 489.2) scale(1 1.12)" font-size="8.2" fill="#222" text-anchor="middle">0.60</text>
<text transform="translate(749.4 489.2) scale(1 1.12)" font-size="8.2" fill="#222" text-anchor="middle">0.80</text>
<text transform="translate(811.5 489.2) scale(1 1.12)" font-size="8.2" fill="#222" text-anchor="middle">1.00</text>
<text transform="translate(656 499.7) scale(1 1.12)" font-size="8.3" fill="#222" text-anchor="middle">Frequency [GHz]</text>
<text transform="translate(637.5 227.3) scale(1 0.97)" font-size="13.4" fill="#111" text-anchor="middle">dB(S(U41_VCC, U41_VCC))</text>
<text transform="translate(465.6 357.3) rotate(-90) scale(1 1.12)" font-size="8.4" fill="#222" text-anchor="middle">dB(S(U41_VCC, U41_VCC))</text>
<g transform="translate(812.6 217)"><path d="M-0.3 0.3L3.5 7.2H-4Z" fill="#e04848" opacity="0.75"/><path d="M0 0.2L3.8 7.2H-4" fill="none" stroke="#9aa" stroke-width="0.5"/><circle cx="-0.6" cy="2.8" r="0.9" fill="#e83030"/><circle cx="-2.3" cy="6" r="0.9" fill="#e83030"/><circle cx="0.2" cy="6" r="0.9" fill="#e83030"/><circle cx="2.2" cy="6" r="0.9" fill="#e83030"/></g>
<rect x="695.7" y="235" width="125" height="41" fill="#000" fill-opacity="0.2"/>
<rect x="691.7" y="231.6" width="125" height="41.4" fill="#fff" stroke="#3a3a3a" stroke-width="1"/>
<line x1="692.2" y1="244.2" x2="816.2" y2="244.2" stroke="#d0d0d0"/>
<text transform="translate(754.2 240.6) scale(1 1.12)" font-size="7.8" fill="#222" text-anchor="middle">Curve Info</text>
<line x1="694.4" y1="250" x2="710.6" y2="250" stroke="#c00000" stroke-width="1.5"/>
<text transform="translate(716.9 253.3) scale(1 1.12)" font-size="7.6" fill="#222">dB(S(U41_VCC, U41_VCC))</text>
<text transform="translate(694.4 261.3) scale(1 1.12)" font-size="7.8" fill="#222">siwave_board_test1.s1p</text>
</svg>
</body></html>
